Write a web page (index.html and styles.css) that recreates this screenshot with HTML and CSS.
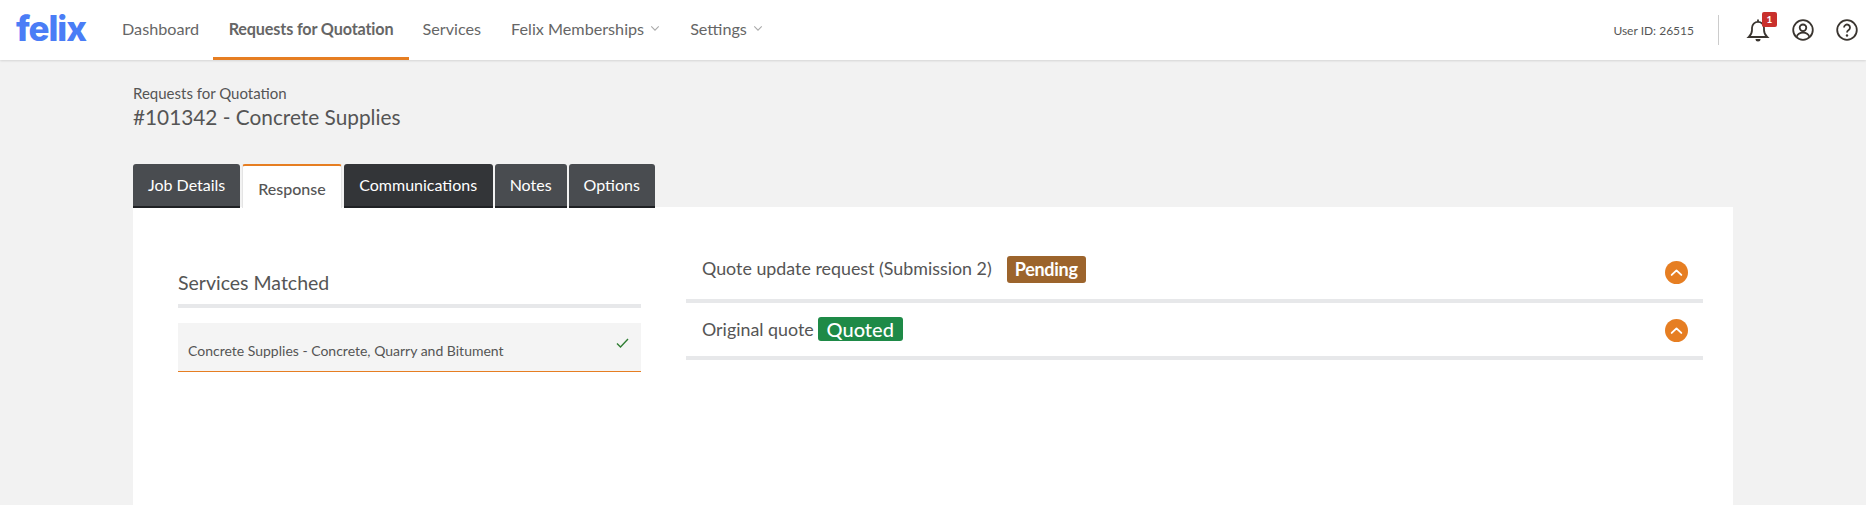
FILE: index.html
```html
<!DOCTYPE html>
<html lang="en">
<head>
<meta charset="utf-8">
<title>Felix</title>
<link rel="stylesheet" href="styles.css">
</head>
<body>
<header class="topbar">
  <a class="logo">felix</a>
  <nav class="nav">
    <a class="nav-item">Dashboard</a>
    <a class="nav-item active">Requests for Quotation</a>
    <a class="nav-item">Services</a>
    <a class="nav-item">Felix Memberships
      <svg class="caret" viewBox="0 0 12 8"><path d="M1.500 1.500 6 6l4.500-4.500"/></svg></a>
    <a class="nav-item">Settings
      <svg class="caret" viewBox="0 0 12 8"><path d="M1.500 1.500 6 6l4.500-4.500"/></svg></a>
  </nav>
  <div class="user">
    <span class="user-id">User ID: 26515</span>
    <span class="divider"></span>
    <span class="bell">
      <svg class="icon" viewBox="0 0 24 24"><path d="M2.800 19c1.900-1.700 3.200-3.700 3.200-7V9.800a6 6 0 0 1 12 0V12c0 3.300 1.300 5.300 3.200 7z"/><path d="M12 1.500v2.300"/><path class="fill" d="M9.500 21h5a2.500 2.500 0 0 1-5 0z"/></svg>
      <b class="badge-count">1</b>
    </span>
    <svg class="icon" viewBox="0 0 24 24"><circle cx="12" cy="12" r="9.800"/><circle cx="12" cy="9.800" r="3.300"/><path d="M5.600 19c1-3 3.400-4.300 6.400-4.300s5.400 1.300 6.400 4.300"/></svg>
    <svg class="icon" viewBox="0 0 24 24"><circle cx="12" cy="12" r="9.800"/><path d="M9 9.500a3 3 0 1 1 4.700 2.500c-1 .7-1.700 1.200-1.700 2.400"/><path class="dot" d="M12 17.400v.1"/></svg>
  </div>
</header>

<main class="page">
  <div class="crumb">Requests for Quotation</div>
  <h1 class="title">#101342 - Concrete Supplies</h1>

  <div class="tabs">
    <a class="tab">Job Details</a>
    <a class="tab current">Response</a>
    <a class="tab dark">Communications</a>
    <a class="tab">Notes</a>
    <a class="tab">Options</a>
  </div>

  <section class="panel">
    <div class="col-left">
      <h2 class="services-title">Services Matched</h2>
      <div class="service">
        <span>Concrete Supplies - Concrete, Quarry and Bitument</span>
        <svg class="check" viewBox="0 0 14 12"><path d="M1.500 6.500 5 10l7.500-8"/></svg>
      </div>
    </div>
    <div class="col-right">
      <div class="quote first">
        <span class="quote-label">Quote update request (Submission 2)</span>
        <span class="status pending">Pending</span>
        <svg class="toggle" viewBox="0 0 24 24"><circle cx="12" cy="12" r="12"/><path d="M7 14.500 12 9.800l5 4.700"/></svg>
      </div>
      <div class="quote second">
        <span class="quote-label">Original quote</span>
        <span class="status quoted">Quoted</span>
        <svg class="toggle" viewBox="0 0 24 24"><circle cx="12" cy="12" r="12"/><path d="M7 14.500 12 9.800l5 4.700"/></svg>
      </div>
    </div>
  </section>
</main>
</body>
</html>
```
FILE: styles.css
```css
* { box-sizing: border-box; }
html, body { margin: 0; height: 100%; overflow: hidden; }
body {
  background: #f2f2f2;
  font-family: Lato, "Liberation Sans", sans-serif;
  color: #555;
}
.topbar {
  height: 60px;
  background: #fff;
  display: flex;
  align-items: stretch;
  padding-left: 16px;
  box-shadow: 0 1px 2px rgba(0,0,0,.12);
}
.logo {
  width: 76px;
  font-family: Inter, sans-serif;
  font-weight: 800;
  font-size: 35px;
  letter-spacing: -1.100px;
  line-height: 56px;
  color: #4a7df6;
}
.nav { display: flex; margin-left: 14px; }
.nav-item {
  display: flex;
  align-items: center;
  gap: 6px;
  padding: 0 16px;
  margin-right: -2px;
  font-size: 16.200px;
  color: #666;
  height: 60px;
  border-bottom: 3px solid transparent;
}
.nav-item.active { font-weight: 700; border-bottom-color: #e67e22; letter-spacing: -.15px; padding: 0 15.500px; margin-right: -2.400px; }
.caret { width: 10px; height: 7px; fill: none; stroke: #aaa; stroke-width: 1.300; }
.user {
  margin-left: auto;
  display: flex;
  align-items: center;
  padding-right: 7px;
}
.user-id { font-size: 12px; color: #555; margin-right: 24px; }
.divider { width: 1px; height: 30px; background: #ccc; margin-right: 27px; }
.bell { position: relative; display: flex; margin-right: 21px; }
.icon { width: 24px; height: 24px; fill: none; stroke: #3a3530; stroke-width: 1.800; display: block; }
.user > .icon + .icon { margin-left: 20px; }
.icon .fill { fill: #3a3530; stroke: none; }
.icon .dot { stroke-width: 2.400; stroke-linecap: round; }
.badge-count {
  position: absolute;
  left: 16px;
  top: -6px;
  width: 15px;
  height: 15px;
  background: #c9302c;
  border-radius: 2px;
  color: #fff;
  font-size: 10px;
  line-height: 15px;
  text-align: center;
}
.page { padding: 24px 133px 0 133px; }
.crumb { font-size: 15px; line-height: 18px; color: #555; }
.title { margin: 2px 0 0; font-size: 20.800px; font-weight: 400; line-height: 26px; color: #555; }
.tabs { display: flex; gap: 2px; margin-top: 34px; height: 44px; }
.tab {
  height: 44px;
  padding: 0 15px;
  background: #494c50;
  color: #fff;
  font-size: 16px;
  line-height: 41px;
  border-radius: 3px 3px 0 0;
  border-bottom: 2px solid #1f2124;
}
.tab.dark { background: #333538; padding: 0 15.500px; }
.tab.current {
  background: #fff;
  color: #555;
  font-weight: 500;
  line-height: 45px;
  border: 1px solid #e4e4e4;
  border-top: 2px solid #e67e22;
  border-bottom: 0;
  position: relative;
  z-index: 1;
}
.panel {
  background: #fff;
  height: 300px;
  margin-top: -1px;
  display: flex;
  padding: 0 30px 0 45px;
}
.col-left { width: 463px; padding-top: 60px; }
.services-title {
  margin: 0;
  font-size: 19.500px;
  font-weight: 400;
  line-height: 31px;
  height: 41px;
  color: #555;
  border-bottom: 4px solid #e7e8ea;
}
.service {
  margin-top: 15px;
  height: 49px;
  background: #f4f4f4;
  border-bottom: 1px solid #e67e22;
  padding: 19px 11px 0 10px;
  font-size: 14px;
  line-height: 18px;
  display: flex;
  justify-content: space-between;
  color: #555;
}
.check { width: 15px; height: 12px; margin-top: -5px; fill: none; stroke: #2e7d32; stroke-width: 1.400; }
.col-right { width: 1017px; margin-left: 45px; padding-top: 37px; }
.quote {
  display: flex;
  align-items: center;
  border-bottom: 4px solid #e7e8ea;
  padding: 0 15px 0 16px;
  font-size: 17.850px;
  color: #555;
}
.quote.first { height: 59px; padding-bottom: 8px; }
.quote.first .pending { margin-top: 4px; }
.quote.first .toggle { margin-top: 9px; }
.quote.second { height: 57px; padding-bottom: 1px; }
.quote.second .toggle { margin-top: 2px; }
.status { color: #fff; border-radius: 3px; }
.pending {
  margin-left: 15px;
  width: 79px;
  height: 27px;
  background: #9c642c;
  font-weight: 700;
  font-size: 18px;
  line-height: 27px;
  text-align: center;
  letter-spacing: -.3px;
}
.quoted {
  margin-left: 4px;
  width: 85px;
  height: 24px;
  background: #1e8a47;
  font-weight: 500;
  font-size: 20px;
  line-height: 24px;
  text-align: center;
}
.toggle { margin-left: auto; width: 23px; height: 23px; }
.toggle circle { fill: #e67e22; }
.toggle path { fill: none; stroke: #fff; stroke-width: 2; stroke-linecap: round; stroke-linejoin: round; }
```
